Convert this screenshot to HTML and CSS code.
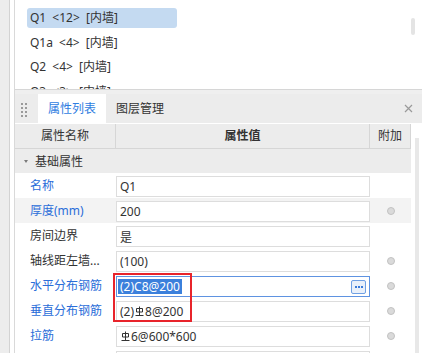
FILE: index.html
```html
<!DOCTYPE html>
<html lang="zh-CN">
<head>
  <meta charset="UTF-8" />
  <title>属性列表</title>
  <link rel="stylesheet" href="styles.css">
</head>
<body>
  <div class="app">
    <div class="side"></div>
    <div class="main">
      <div class="list">
        <div class="list-items">
          <div class="list-item selected">Q1 &lt;12&gt; [内墙]</div>
          <div class="list-item">Q1a &lt;4&gt; [内墙]</div>
          <div class="list-item">Q2 &lt;4&gt; [内墙]</div>
          <div class="list-item">Q3 &lt;3&gt; [内墙]</div>
        </div>
        <div class="list-scroll"><div class="list-thumb"></div></div>
      </div>
      <div class="split"></div>

      <div class="panel">
        <div class="tabs">
          <div class="grip">
            <span></span><span></span><span></span><span></span>
            <span></span><span></span><span></span><span></span>
          </div>
          <div class="tab active">属性列表</div>
          <div class="tab">图层管理</div>
          <div class="close">
            <svg width="9" height="9" viewBox="0 0 9 9"><path d="M1 1L8 8M8 1L1 8" stroke="#9a9a9a" stroke-width="1.2"/></svg>
          </div>
        </div>

        <div class="panel-body">
          <div class="grid">
            <div class="head-row">
              <div class="hcell">属性名称</div>
              <div class="hcell bold">属性值</div>
              <div class="hcell">附加</div>
            </div>
            <div class="group-row"><span class="caret"></span>基础属性</div>

            <div class="row">
              <div class="name blue">名称</div>
              <div class="value"><div class="input">Q1</div></div>
              <div class="extra"></div>
            </div>
            <div class="row hover">
              <div class="name blue">厚度(mm)</div>
              <div class="value"><div class="input">200</div></div>
              <div class="extra"><span class="dot"></span></div>
            </div>
            <div class="row">
              <div class="name">房间边界</div>
              <div class="value"><div class="input">是</div></div>
              <div class="extra"></div>
            </div>
            <div class="row">
              <div class="name">轴线距左墙...</div>
              <div class="value"><div class="input">(100)</div></div>
              <div class="extra"><span class="dot"></span></div>
            </div>
            <div class="row">
              <div class="name blue">水平分布钢筋</div>
              <div class="value">
                <div class="input focus">
                  <span class="sel">(2)C8@200</span>
                  <span class="more"><i></i><i></i><i></i></span>
                </div>
              </div>
              <div class="extra"><span class="dot"></span></div>
            </div>
            <div class="row">
              <div class="name blue">垂直分布钢筋</div>
              <div class="value">
                <div class="input">(2)<svg class="rebar" width="9" height="12" viewBox="0 0 9 12"><path d="M4.5 0.5V9M1.5 2.5H7.5V6H1.5ZM0.5 9.5H8.5" fill="none" stroke="#333" stroke-width="1"/></svg>8@200</div>
              </div>
              <div class="extra"><span class="dot"></span></div>
            </div>
            <div class="row">
              <div class="name blue">拉筋</div>
              <div class="value">
                <div class="input"><svg class="rebar" width="9" height="12" viewBox="0 0 9 12"><path d="M4.5 0.5V9M1.5 2.5H7.5V6H1.5ZM0.5 9.5H8.5" fill="none" stroke="#333" stroke-width="1"/></svg>6@600*600</div>
              </div>
              <div class="extra"><span class="dot"></span></div>
            </div>
            <div class="row">
              <div class="name blue"></div>
              <div class="value"><div class="input"></div></div>
              <div class="extra"></div>
            </div>
          </div>
          <div class="vscroll"></div>
        </div>
      </div>
    </div>
  </div>

  <div class="mark"></div>
</body>
</html>
```

FILE: styles.css
```css
body {
    margin: 0;
    width: 422px;
    height: 353px;
    overflow: hidden;
    position: relative;
    background-color: #fff;
    font-family: "Noto Sans", "Noto Sans CJK SC", sans-serif;
    font-size: 12px;
    color: #333;
}
.app {
    display: flex;
    height: 353px;
}
.side {
    width: 9px;
    background-color: #ededed;
    border-right: 1px solid #d3d3d3;
}
.main {
    flex: 1;
    min-width: 0;
    margin-left: 4px;
    border-left: 1px solid #d9d9d9;
    display: flex;
    flex-direction: column;
    overflow: hidden;
}

/* component list */
.list {
    flex-shrink: 0;
    height: 89px;
    border-bottom: 1px solid #d6d6d6;
    display: flex;
    overflow: hidden;
}
.list-items {
    flex: 1;
    padding: 8px 0 0 12px;
}
.list-item {
    width: 150px;
    height: 20px;
    line-height: 20px;
    padding-left: 3px;
    margin-bottom: 4.5px;
    border-radius: 3px;
    box-sizing: border-box;
    white-space: pre;
    word-spacing: 3px;
}
.list-item.selected {
    background-color: #c4daf1;
}
.list-scroll {
    width: 4px;
    margin: 18px 7px 0 0;
}
.list-thumb {
    height: 17px;
    background-color: #e4e4e4;
    border-radius: 2px;
}
.split {
    flex-shrink: 0;
    height: 4px;
    background-color: #efefef;
}

/* property panel */
.panel {
    flex: 1;
    min-height: 0;
    display: flex;
    flex-direction: column;
}
.tabs {
    flex-shrink: 0;
    height: 29px;
    background-color: #ececec;
    display: flex;
}
.grip {
    display: grid;
    grid-template-columns: repeat(2, 2px);
    grid-auto-rows: 2px;
    gap: 2px;
    align-content: center;
    padding: 2px 11px 0 6px;
}
.grip span {
    background-color: #9a9a9a;
}
.tab {
    padding: 0 10px;
    line-height: 29px;
}
.tab.active {
    background-color: #fff;
    color: #2f7de1;
}
.close {
    margin-left: auto;
    padding-right: 9px;
    display: flex;
    align-items: center;
}
.panel-body {
    flex: 1;
    min-height: 0;
    display: flex;
    border-top: 1px solid #fff;
}
.grid {
    flex-shrink: 0;
    width: 396px;
}
.head-row, .row {
    display: grid;
    grid-template-columns: 101px 254px 41px;
}
.head-row {
    height: 24px;
    background-color: #ececec;
    border-bottom: 1px solid #d6d6d6;
}
.hcell {
    border-right: 1px solid #d6d6d6;
    text-align: center;
    line-height: 24px;
}
.hcell.bold {
    font-weight: bold;
}
.group-row {
    height: 24px;
    background-color: #ececec;
    display: flex;
    align-items: center;
}
.caret {
    margin: 0 7px 0 9px;
    border-left: 2.5px solid transparent;
    border-right: 2.5px solid transparent;
    border-top: 3px solid #7a7a7a;
}
.row {
    height: 25px;
}
.row.hover {
    background-color: #f3f3f3;
}
.name {
    padding-left: 15px;
    line-height: 25px;
    white-space: nowrap;
    overflow: hidden;
}
.blue {
    color: #2a6dd9;
}
.value {
    padding-top: 3px;
}
.input {
    height: 21px;
    box-sizing: border-box;
    border: 1px solid #dddddd;
    background-color: #fff;
    padding-left: 3px;
    display: flex;
    align-items: center;
    white-space: pre;
}
.input.focus {
    border-color: #5f93e1;
}
.sel {
    margin-left: -2px;
    padding: 0 2px;
    line-height: 15px;
    background-color: #3b80dc;
    color: #fff;
}
.more {
    margin-left: auto;
    margin-right: 3px;
    width: 15px;
    height: 14px;
    box-sizing: border-box;
    border: 1px solid #6fa0e4;
    border-radius: 2px;
    background-color: #e9f0fa;
    display: flex;
    align-items: center;
    justify-content: center;
    gap: 1px;
}
.more i {
    width: 2px;
    height: 2px;
    background-color: #3a7ad8;
}
.rebar {
    margin: 0 1px;
}
.extra {
    display: flex;
    align-items: center;
    justify-content: center;
}
.dot {
    width: 8px;
    height: 8px;
    border-radius: 50%;
    box-sizing: border-box;
    background-color: #dadada;
    border: 1px solid #c2c2c2;
}
.vscroll {
    width: 4px;
    margin: 14px 0 0 4px;
    background-color: #e8e8e8;
}

/* red annotation frame */
.mark {
    position: absolute;
    left: 113px;
    top: 273px;
    width: 79px;
    height: 49px;
    box-sizing: border-box;
    border: 2px solid #e8242b;
}
```
